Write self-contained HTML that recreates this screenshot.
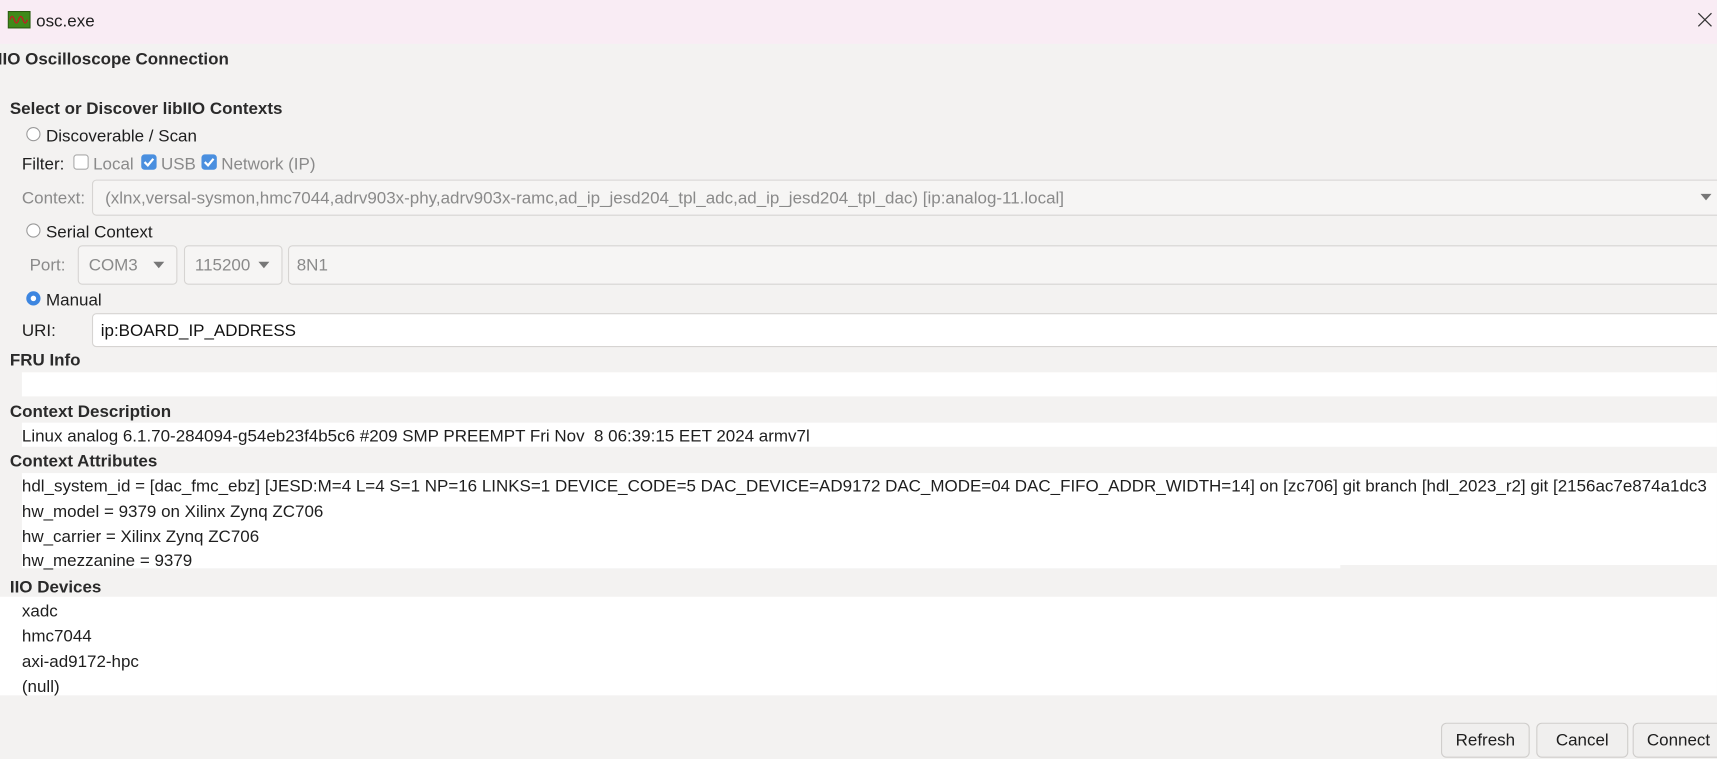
<!DOCTYPE html>
<html><head><meta charset="utf-8"><style>
html,body{margin:0;padding:0;width:1717px;height:756px;overflow:hidden;background:#f3f2f1}
#w{position:absolute;left:0;top:0;width:1568px;height:690px;transform:scale(1.095);transform-origin:0 0;font-family:"Liberation Sans",sans-serif;font-size:15.5px;color:#1e1e1e}
.a{position:absolute;white-space:nowrap;line-height:20px;margin-top:1.5px}
.b{font-weight:bold;color:#2a2a2a}
.g{color:#8a8a8a}
.box{position:absolute;border:1px solid #d6d4d2;border-radius:4px;background:#f6f5f4;box-sizing:border-box}
.wh{position:absolute;background:#fff}
.rad{position:absolute;width:13px;height:13px;border:1px solid #9a9a9a;border-radius:50%;background:#fff;box-sizing:border-box}
.cb{position:absolute;width:14px;height:14px;border-radius:3px;box-sizing:border-box}
.arr{position:absolute;width:0;height:0;border-left:5px solid transparent;border-right:5px solid transparent;border-top:6px solid #777}
.btn{position:absolute;top:660px;height:32px;border:1px solid #cfcdcb;border-radius:5px;background:#f0efee;box-sizing:border-box;text-align:center;line-height:32px}
</style></head><body><div id="w">
<div style="position:absolute;left:0;top:0;width:1568px;height:40px;background:#f9ecf4"></div>
<svg style="position:absolute;left:7px;top:10px" width="21" height="16"><rect x="0.5" y="0.5" width="20" height="15" fill="#3f8a1a" stroke="#2a5a10"/><path d="M2 8 Q4 2 6 8 T10 8 T14 8 T18 8" stroke="#c02020" fill="none" stroke-width="1.3"/></svg>
<div class="a" style="left:33px;top:8px">osc.exe</div>
<svg style="position:absolute;left:1549px;top:10px" width="16" height="16"><path d="M2 2L14 14M14 2L2 14" stroke="#333" stroke-width="1.1"/></svg>

<div class="a b" style="left:-2px;top:43px">IIO Oscilloscope Connection</div>
<div class="a b" style="left:9px;top:88px">Select or Discover libIIO Contexts</div>
<div class="rad" style="left:24px;top:116px"></div><div class="a" style="left:42px;top:113px">Discoverable / Scan</div>
<div class="a" style="left:20px;top:139px">Filter:</div>
<div class="cb" style="left:67px;top:141px;border:1px solid #aaa;background:#fff"></div><div class="a g" style="left:85px;top:139px">Local</div>
<div class="cb" style="left:129px;top:141px;background:#4a8fdf"><svg width="14" height="14" style="position:absolute;left:0;top:0"><path d="M3 7l3 3 5-6" stroke="#fff" stroke-width="2" fill="none"/></svg></div><div class="a g" style="left:147px;top:139px">USB</div>
<div class="cb" style="left:184px;top:141px;background:#4a8fdf"><svg width="14" height="14" style="position:absolute;left:0;top:0"><path d="M3 7l3 3 5-6" stroke="#fff" stroke-width="2" fill="none"/></svg></div><div class="a g" style="left:202px;top:139px">Network (IP)</div>
<div class="a g" style="left:20px;top:170px">Context:</div>
<div class="box" style="left:84px;top:164px;width:1500px;height:33px"></div>
<div class="a g" style="left:96px;top:170px">(xlnx,versal-sysmon,hmc7044,adrv903x-phy,adrv903x-ramc,ad_ip_jesd204_tpl_adc,ad_ip_jesd204_tpl_dac) [ip:analog-11.local]</div>
<div class="arr" style="left:1553px;top:177px"></div>
<div class="rad" style="left:24px;top:204px"></div><div class="a" style="left:42px;top:201px">Serial Context</div>
<div class="a g" style="left:27px;top:231px">Port:</div>
<div class="box" style="left:71px;top:224px;width:91px;height:36px"></div><div class="a g" style="left:81px;top:231px">COM3</div><div class="arr" style="left:140px;top:239px"></div>
<div class="box" style="left:168px;top:224px;width:90px;height:36px"></div><div class="a g" style="left:178px;top:231px">115200</div><div class="arr" style="left:236px;top:239px"></div>
<div class="box" style="left:263px;top:224px;width:1320px;height:36px"></div><div class="a g" style="left:271px;top:231px">8N1</div>
<div class="rad" style="left:24px;top:266px;border:4px solid #3d86e0"></div><div class="a" style="left:42px;top:263px">Manual</div>
<div class="a" style="left:20px;top:291px">URI:</div>
<div class="box" style="left:84px;top:286px;width:1500px;height:31px;background:#fff"></div>
<div class="a" style="left:92px;top:291px;color:#111">ip:BOARD_IP_ADDRESS</div>
<div class="a b" style="left:9px;top:318px">FRU Info</div>
<div class="wh" style="left:20px;top:340px;width:1548px;height:22px"></div>
<div class="a b" style="left:9px;top:365px">Context Description</div>
<div class="wh" style="left:20px;top:386px;width:1548px;height:22px"></div>
<div class="a" style="left:20px;top:387px">Linux analog 6.1.70-284094-g54eb23f4b5c6 #209 SMP PREEMPT Fri Nov&nbsp; 8 06:39:15 EET 2024 armv7l</div>
<div class="a b" style="left:9px;top:410px">Context Attributes</div>
<div class="wh" style="left:20px;top:432px;width:1548px;height:84px"></div>
<div class="wh" style="left:20px;top:516px;width:1204px;height:3px"></div>
<div class="a" style="left:20px;top:433px">hdl_system_id = [dac_fmc_ebz] [JESD:M=4 L=4 S=1 NP=16 LINKS=1 DEVICE_CODE=5 DAC_DEVICE=AD9172 DAC_MODE=04 DAC_FIFO_ADDR_WIDTH=14] on [zc706] git branch [hdl_2023_r2] git [2156ac7e874a1dc3</div>
<div class="a" style="left:20px;top:456px">hw_model = 9379 on Xilinx Zynq ZC706</div>
<div class="a" style="left:20px;top:479px">hw_carrier = Xilinx Zynq ZC706</div>
<div class="a" style="left:20px;top:501px">hw_mezzanine = 9379</div>
<div class="a b" style="left:9px;top:525px">IIO Devices</div>
<div class="wh" style="left:0px;top:545px;width:1568px;height:90px"></div>
<div class="a" style="left:20px;top:547px">xadc</div>
<div class="a" style="left:20px;top:570px">hmc7044</div>
<div class="a" style="left:20px;top:593px">axi-ad9172-hpc</div>
<div class="a" style="left:20px;top:616px">(null)</div>
<div class="btn" style="left:1316px;width:81px">Refresh</div>
<div class="btn" style="left:1403px;width:84px">Cancel</div>
<div class="btn" style="left:1491px;width:90px;text-align:left;padding-left:12px">Connect</div>
</div></body></html>
